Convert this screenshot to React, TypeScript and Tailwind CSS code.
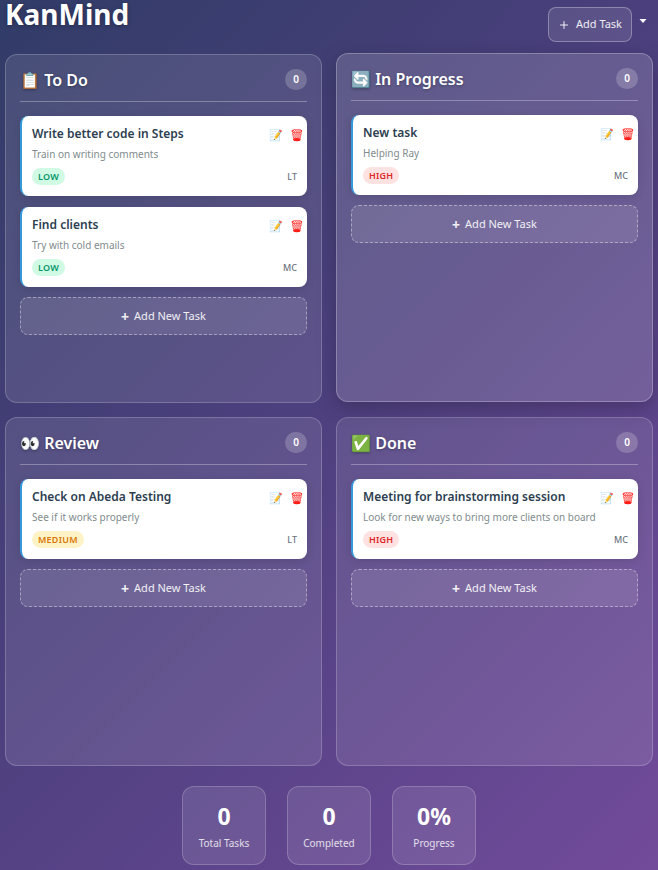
import { Plus } from "lucide-react";

type Priority = "LOW" | "MEDIUM" | "HIGH";

interface Task {
  title: string;
  description: string;
  priority: Priority;
  assignee: string;
}

interface Column {
  icon: string;
  name: string;
  raised?: boolean;
  tasks: Task[];
}

const columns: Column[] = [
  {
    icon: "📋",
    name: "To Do",
    tasks: [
      { title: "Write better code in Steps", description: "Train on writing comments", priority: "LOW", assignee: "LT" },
      { title: "Find clients", description: "Try with cold emails", priority: "LOW", assignee: "MC" },
    ],
  },
  {
    icon: "🔄",
    name: "In Progress",
    raised: true,
    tasks: [{ title: "New task", description: "Helping Ray", priority: "HIGH", assignee: "MC" }],
  },
  {
    icon: "👀",
    name: "Review",
    tasks: [{ title: "Check on Abeda Testing", description: "See if it works properly", priority: "MEDIUM", assignee: "LT" }],
  },
  {
    icon: "✅",
    name: "Done",
    tasks: [
      {
        title: "Meeting for brainstorming session",
        description: "Look for new ways to bring more clients on board",
        priority: "HIGH",
        assignee: "MC",
      },
    ],
  },
];

const stats = [
  { value: "0", label: "Total Tasks" },
  { value: "0", label: "Completed" },
  { value: "0%", label: "Progress" },
];

const badgeStyles: Record<Priority, string> = {
  LOW: "bg-[#d1fae5] text-[#059669]",
  MEDIUM: "bg-[#fef3c7] text-[#d97706]",
  HIGH: "bg-[#fee2e2] text-[#dc2626]",
};

function TaskCard({ task }: { task: Task }) {
  return (
    <article className="flex h-20 flex-col rounded-lg border-l-2 border-[#3498db] bg-white pl-[10px] shadow-[0_2px_8px_rgba(0,0,0,0.12)]">
      <div className="flex items-start justify-between pt-2">
        <h3 className="text-[12px] leading-[19px] font-semibold text-[#2c3e50]">{task.title}</h3>
        <div className="flex gap-[7px] pt-1 pr-[3px]">
          <button type="button" aria-label="Edit task" className="h-[14px] w-[14px] text-[11px] leading-[14px]">
            📝
          </button>
          <button
            type="button"
            aria-label="Delete task"
            className="h-[14px] w-[14px] text-[11px] leading-[14px] [filter:brightness(0.45)_sepia(1)_hue-rotate(-48deg)_saturate(10)]"
          >
            🗑️
          </button>
        </div>
      </div>
      <p className="mt-[3px] text-[10px] leading-[16px] text-[#7f8c8d]">{task.description}</p>
      <div className="mt-[6px] flex items-center justify-between pr-[10px]">
        <span
          className={`rounded-full px-[6px] text-[9px] leading-[17px] font-semibold tracking-wide ${badgeStyles[task.priority]}`}
        >
          {task.priority}
        </span>
        <span className="text-[9px] leading-[17px] font-medium text-[#6b7280]">{task.assignee}</span>
      </div>
    </article>
  );
}

function BoardColumn({ column }: { column: Column }) {
  return (
    <section
      className={`min-h-[349px] rounded-xl border p-[14px] ${
        column.raised
          ? "-translate-y-px border-white/25 bg-white/15 shadow-[0_6px_20px_rgba(0,0,0,0.22)]"
          : "border-white/20 bg-white/10"
      }`}
    >
      <header className="flex h-[33px] items-start justify-between border-b border-white/30">
        <h2 className="text-[16px] leading-[22px] font-semibold text-white [text-shadow:0_1px_3px_rgba(0,0,0,0.3)]">
          {column.icon} {column.name}
        </h2>
        <span className="flex h-[21px] w-[22px] items-center justify-center rounded-full bg-white/20 text-[10px] font-semibold text-white">
          0
        </span>
      </header>
      <div className="mt-[14px] flex flex-col gap-[11px]">
        {column.tasks.map((task) => (
          <TaskCard key={task.title} task={task} />
        ))}
        <button
          type="button"
          className="-mt-px flex h-[38px] items-center justify-center gap-[5px] rounded-lg border border-dashed border-white/40 bg-white/10 text-[11px] text-white/90"
        >
          <span className="text-[14px] font-bold">+</span>
          Add New Task
        </button>
      </div>
    </section>
  );
}

export default function App() {
  return (
    <div className="min-h-screen bg-[linear-gradient(135deg,#313c67_0%,#4f4080_50%,#724b9b_100%)] px-[5px] pb-[5px] font-['Noto_Sans',sans-serif]">
      <header className="flex h-[54px] items-start justify-between">
        <h1 className="text-[28px] leading-7 font-bold text-white [text-shadow:0_1px_4px_rgba(0,0,0,0.3)]">KanMind</h1>
        <div className="flex items-start gap-[7px] pt-[7px] pr-[6px]">
          <button
            type="button"
            className="flex h-[35px] w-[84px] items-center justify-center gap-[6px] rounded-lg border border-white/30 bg-white/10 text-[11px] text-white/90"
          >
            <Plus className="size-3" strokeWidth={2} />
            Add Task
          </button>
          <button type="button" aria-label="More options" className="flex h-7 items-center">
            <svg viewBox="0 0 8 4" className="h-1 w-2" aria-hidden="true">
              <path d="M0.5 0h7L4 4Z" fill="white" />
            </svg>
          </button>
        </div>
      </header>
      <main className="grid grid-cols-2 gap-[14px]">
        {columns.map((column) => (
          <BoardColumn key={column.name} column={column} />
        ))}
      </main>
      <footer className="mt-5 flex justify-center gap-[21px]">
        {stats.map((stat) => (
          <div
            key={stat.label}
            className="flex h-[79px] w-[84px] flex-col items-center rounded-xl border border-white/20 bg-white/10 pt-[13px]"
          >
            <strong className="text-[23px] leading-8 font-bold text-white">{stat.value}</strong>
            <span className="mt-[3px] text-[10px] leading-[16px] text-white/80">{stat.label}</span>
          </div>
        ))}
      </footer>
    </div>
  );
}
